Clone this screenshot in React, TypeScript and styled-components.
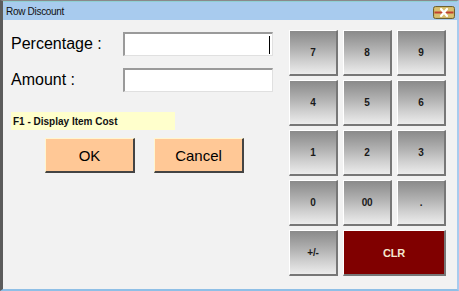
import React from "react";
import styled, { createGlobalStyle } from "styled-components";

const Global = createGlobalStyle`
  html, body { margin: 0; padding: 0; background: #f0f0f0; }
  body { font-family: "Liberation Sans", Arial, sans-serif; }
`;

const Window = styled.div`
  width: 459px;
  height: 291px;
  box-sizing: border-box;
  display: flex;
  flex-direction: column;
  background: #f2f2f2;
  border-top: 1px solid #8a8a8a;
  border-left: 3px solid #5c5c5c;
  border-right: 2px solid #a8cbee;
  border-bottom: 2px solid #8fbfe6;
  overflow: hidden;
`;

const TitleBar = styled.div`
  height: 18px;
  flex: none;
  display: flex;
  align-items: center;
  justify-content: space-between;
  background: #a8cbee;
  border-top: 1px solid #8fd0d4;
  padding: 0 2px 0 3px;
`;

const Title = styled.span`
  font-size: 10px;
  letter-spacing: -0.3px;
  color: #111;
`;

const CloseBtn = styled.div`
  width: 22px;
  height: 13px;
  display: flex;
  margin-top: 2px;
`;

const Body = styled.div`
  flex: 1;
  display: flex;
  padding: 10px 0 0 0;
`;

const LeftPane = styled.div`
  width: 286px;
  display: flex;
  flex-direction: column;
  padding: 2px 0 0 8px;
  box-sizing: border-box;
`;

const FieldRow = styled.div<{ $mt: number }>`
  display: flex;
  align-items: center;
  margin-top: ${(p) => p.$mt}px;
  height: 24px;
`;

const Label = styled.label`
  width: 112px;
  font-size: 16px;
  color: #000;
`;

const Input = styled.div<{ $focused?: boolean }>`
  width: 150px;
  height: 24px;
  box-sizing: border-box;
  background: #fff;
  border-top: 2px solid #9a9a9a;
  border-left: 2px solid #9a9a9a;
  border-right: 1px solid #e0e0e0;
  border-bottom: 1px solid #e0e0e0;
  display: flex;
  justify-content: flex-end;
  align-items: center;
  padding-right: 2px;
`;

const Caret = styled.span`
  width: 1px;
  height: 18px;
  background: #000;
`;

const Note = styled.div`
  margin-top: 20px;
  width: 164px;
  height: 18px;
  background: #ffffcc;
  font-size: 10px;
  font-weight: bold;
  color: #111;
  display: flex;
  align-items: center;
  padding-left: 2px;
  box-sizing: border-box;
`;

const ActionRow = styled.div`
  display: flex;
  gap: 19px;
  margin-top: 8px;
  padding-left: 34px;
`;

const ActionButton = styled.button`
  width: 90px;
  height: 35px;
  background: #ffc896;
  border: none;
  border-top: 1px solid #fff6d0;
  border-left: 1px solid #fff6d0;
  border-right: 2px solid #444;
  border-bottom: 2px solid #444;
  font-family: "Liberation Sans", Arial, sans-serif;
  font-size: 15px;
  color: #000;
  padding: 0;
`;

const Keypad = styled.div`
  display: grid;
  grid-template-columns: repeat(3, 49px);
  grid-auto-rows: 46px;
  column-gap: 5px;
  row-gap: 4px;
`;

const Key = styled.button<{ $span?: number; $danger?: boolean }>`
  grid-column: span ${(p) => p.$span ?? 1};
  box-sizing: border-box;
  padding: 0;
  border: none;
  border-top: 1px solid #fff;
  border-left: 1px solid #fff;
  border-right: 2px solid #777;
  border-bottom: 2px solid #777;
  background: ${(p) =>
    p.$danger
      ? "#800000"
      : "linear-gradient(to bottom, #8a8a8a 0%, #9c9c9c 20%, #b4b4b4 45%, #cfcfcf 70%, #ececec 100%)"};
  color: ${(p) => (p.$danger ? "#f4e8d0" : "#1a1a1a")};
  font-family: "Liberation Sans", Arial, sans-serif;
  font-weight: bold;
  font-size: ${(p) => (p.$danger ? "11px" : "10px")};
  letter-spacing: -0.2px;
`;

const keys = ["7", "8", "9", "4", "5", "6", "1", "2", "3", "0", "00", "."];

export default function App() {
  return (
    <>
      <Global />
      <Window>
        <TitleBar>
          <Title>Row Discount</Title>
          <CloseBtn>
            <svg width="22" height="13" viewBox="0 0 22 13">
              <rect x="0.5" y="0.5" width="21" height="12" rx="2" fill="#c8b060" stroke="#6e6030" />
              <rect x="1.5" y="1.5" width="19" height="10" rx="1" fill="#d8c070" />
              <rect x="1.5" y="5.5" width="19" height="2" fill="#c04030" />
              <path d="M8 3 L14 10 M14 3 L8 10" stroke="#fff" strokeWidth="2.2" strokeLinecap="round" />
            </svg>
          </CloseBtn>
        </TitleBar>
        <Body>
          <LeftPane>
            <FieldRow $mt={0}>
              <Label>Percentage :</Label>
              <Input $focused>
                <Caret />
              </Input>
            </FieldRow>
            <FieldRow $mt={12}>
              <Label>Amount :</Label>
              <Input />
            </FieldRow>
            <Note>F1 - Display Item Cost</Note>
            <ActionRow>
              <ActionButton>OK</ActionButton>
              <ActionButton>Cancel</ActionButton>
            </ActionRow>
          </LeftPane>
          <Keypad>
            {keys.map((k) => (
              <Key key={k}>{k}</Key>
            ))}
            <Key>+/-</Key>
            <Key $span={2} $danger>
              CLR
            </Key>
          </Keypad>
        </Body>
      </Window>
    </>
  );
}
